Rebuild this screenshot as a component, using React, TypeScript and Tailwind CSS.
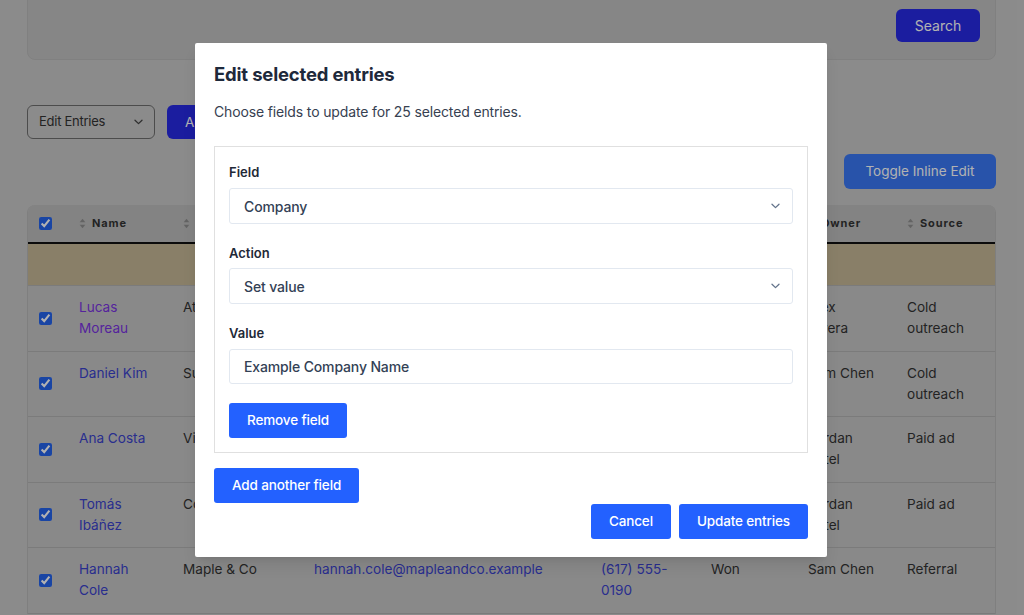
import React from "react";

type Row = {
  name: string;
  visited?: boolean;
  company: string;
  email: string;
  phone: string;
  status: string;
  owner: string;
  source: string;
};

const rows: Row[] = [
  {
    name: "Lucas Moreau",
    visited: true,
    company: "Atlas Labs",
    email: "lucas.moreau@atlaslabs.example",
    phone: "(415) 555-0142",
    status: "New",
    owner: "Alex Rivera",
    source: "Cold outreach",
  },
  {
    name: "Daniel Kim",
    company: "Summit Health",
    email: "daniel.kim@summit.example",
    phone: "(206) 555-0117",
    status: "Contacted",
    owner: "Sam Chen",
    source: "Cold outreach",
  },
  {
    name: "Ana Costa",
    company: "Vista Retail",
    email: "ana.costa@vistaretail.example",
    phone: "(305) 555-0188",
    status: "Qualified",
    owner: "Jordan Patel",
    source: "Paid ad",
  },
  {
    name: "Tomás Ibáñez",
    company: "Costa Foods",
    email: "tomas.ibanez@costafoods.example",
    phone: "(312) 555-0164",
    status: "Proposal",
    owner: "Jordan Patel",
    source: "Paid ad",
  },
  {
    name: "Hannah Cole",
    company: "Maple & Co",
    email: "hannah.cole@mapleandco.example",
    phone: "(617) 555-0190",
    status: "Won",
    owner: "Sam Chen",
    source: "Referral",
  },
];

const columns = ["Name", "Company", "Email", "Phone", "Status", "Owner", "Source"];

const grid = "grid grid-cols-[35px_104px_131px_287px_110px_97px_99px_1fr]";

function SortIcon() {
  return (
    <svg width="7" height="11" viewBox="0 0 7 11" className="shrink-0 text-[#8f8f8f]">
      <path d="M3.5 0.8 L6.3 4.2 H0.7 Z" fill="currentColor" />
      <path d="M3.5 10.2 L6.3 6.8 H0.7 Z" fill="currentColor" />
    </svg>
  );
}

function Chevron({ className = "" }: { className?: string }) {
  return (
    <svg width="9" height="6" viewBox="0 0 9 6" className={className}>
      <path d="M1 1.2 L4.5 4.6 L8 1.2" fill="none" stroke="currentColor" strokeWidth="1.3" strokeLinecap="round" strokeLinejoin="round" />
    </svg>
  );
}

function FakeSelect({ value }: { value: string }) {
  return (
    <div className="flex h-[36px] w-full items-center justify-between rounded-[3px] border border-[#e2e8f0] pl-[14px] pr-[12px] text-[14px] font-medium tracking-[-0.01em] text-[#334155]">
      <span>{value}</span>
      <Chevron className="text-[#64748b]" />
    </div>
  );
}

function BlueButton({ children }: { children: React.ReactNode }) {
  return (
    <button className="h-[35px] rounded-[3px] bg-[#2361ff] px-[18px] text-[13.5px] font-medium tracking-[-0.01em] text-white">
      {children}
    </button>
  );
}

export default function App() {
  return (
    <div className="relative h-[615px] overflow-hidden bg-[#c8c8c8] font-['Inter',sans-serif]">
      {/* page behind the dialog */}
      <div className="pl-[27px] pr-[28px]">
        <div className="-mt-5 flex justify-end rounded-lg border border-[#b8b8b8] bg-[#c1c1c1] pr-[15px] pt-[28px] pb-[17px]">
          <button className="h-[33px] w-[84px] rounded-md bg-[#272ae4] text-[14px] text-white">Search</button>
        </div>

        <div className="mt-[45px] flex items-center gap-3">
          <div className="flex h-[34px] w-[128px] items-center justify-between rounded-md border border-[#6e6e6e] pl-[11px] pr-[11px] text-[13px] tracking-[-0.02em] text-[#333]">
            <span>Edit Entries</span>
            <Chevron className="text-[#444]" />
          </div>
          <button className="h-[34px] rounded-md bg-[#272ae4] px-[18px] text-[13.5px] text-white">Apply</button>
        </div>

        <div className="mt-[15px] flex justify-end">
          <button className="h-[35px] w-[152px] rounded-md bg-[#3a78f4] text-[13.5px] text-white">Toggle Inline Edit</button>
        </div>

        <div className="mt-4 overflow-hidden rounded-t-lg border-x border-[#b6b6b6] bg-[#c5c5c5]">
          <div className={`${grid} h-[39px] items-center border-b-2 border-[#111] bg-[#bcbcbc]`}>
            <div className="flex justify-center">
              <input type="checkbox" defaultChecked className="accent-[#2563eb]" />
            </div>
            {columns.map((c) => (
              <div key={c} className="flex items-center gap-[6px] pl-4 text-[11px] font-bold tracking-[0.08em] text-[#333]">
                <SortIcon />
                <span>{c}</span>
              </div>
            ))}
          </div>

          <div className="h-[42px] border-b border-[#b0b0b0] bg-[#c4b796]" />

          {rows.map((r) => (
            <div key={r.name} className={`${grid} border-b border-[#b0b0b0] text-[13.6px] leading-[21px] text-[#333]`}>
              <div className="flex items-center justify-center">
                <input type="checkbox" defaultChecked className="accent-[#2563eb]" />
              </div>
              <div className={`px-4 pt-[11px] pb-[11.5px] ${r.visited ? "text-[#7a33e0]" : "text-[#3a42cc]"}`}>{r.name}</div>
              <div className="px-4 pt-[11px] pb-[11.5px]">{r.company}</div>
              <div className="px-4 pt-[11px] pb-[11.5px] text-[#3a42cc]">{r.email}</div>
              <div className="px-4 pt-[11px] pb-[11.5px] text-[#3a42cc]">{r.phone}</div>
              <div className="px-4 pt-[11px] pb-[11.5px]">{r.status}</div>
              <div className="px-4 pt-[11px] pb-[11.5px]">{r.owner}</div>
              <div className="px-4 pt-[11px] pb-[11.5px]">{r.source}</div>
            </div>
          ))}
        </div>
      </div>

      {/* dialog */}
      <div className="absolute inset-0 flex items-start justify-center bg-black/30 pt-[43px] pr-[2px]">
        <div className="w-[632px] rounded-[2px] bg-white px-[19px] pt-[19px] pb-[18px] shadow-lg">
          <h2 className="text-[18.5px] font-bold leading-[24px] tracking-[-0.01em] text-[#1e293b]">Edit selected entries</h2>
          <p className="mt-[15px] text-[14px] leading-[22px] tracking-[-0.01em] text-[#374151]">Choose fields to update for 25 selected entries.</p>

          <div className="mt-[23px] border border-[#e0e0e0] px-[14px] pt-[15px] pb-[14px]">
            <label className="block text-[13px] font-semibold leading-[20px] text-[#1f2937]">Field</label>
            <div className="mt-[6px]">
              <FakeSelect value="Company" />
            </div>

            <label className="mt-[19px] block text-[13px] font-semibold leading-[20px] text-[#1f2937]">Action</label>
            <div className="mt-[5px]">
              <FakeSelect value="Set value" />
            </div>

            <label className="mt-[19px] block text-[13px] font-semibold leading-[20px] text-[#1f2937]">Value</label>
            <input
              readOnly
              value="Example Company Name"
              className="mt-[6px] h-[35px] w-full rounded-[3px] border border-[#e2e8f0] pl-[14px] text-[14px] font-medium tracking-[-0.01em] text-[#334155] outline-none"
            />

            <div className="mt-[19px]">
              <BlueButton>Remove field</BlueButton>
            </div>
          </div>

          <div className="mt-[15px]">
            <BlueButton>Add another field</BlueButton>
          </div>

          <div className="mt-px flex justify-end gap-2">
            <BlueButton>Cancel</BlueButton>
            <BlueButton>Update entries</BlueButton>
          </div>
        </div>
      </div>
    </div>
  );
}
